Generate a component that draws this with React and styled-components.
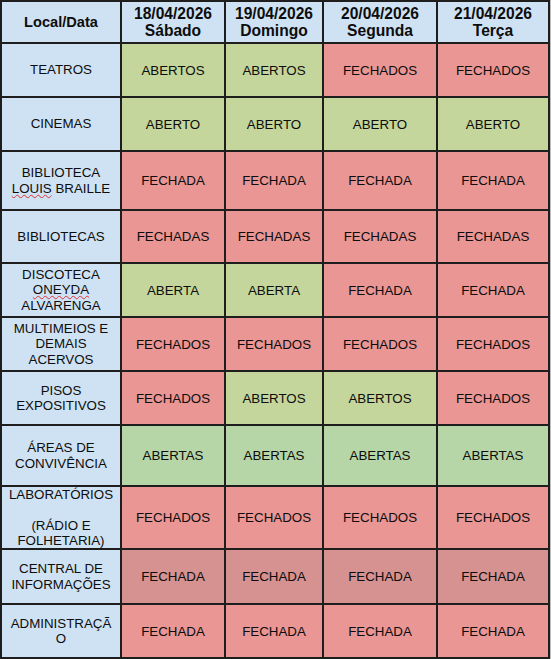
import styled, { createGlobalStyle } from 'styled-components'

const GlobalStyle = createGlobalStyle`
  html, body {
    margin: 0;
    padding: 0;
    background: #ffffff;
  }
  body {
    font-family: "Liberation Sans", Arial, sans-serif;
  }
`;

const Sheet = styled.div`
    display: grid;
    grid-template-columns: 118px 102px 96px 112px 110px;
    gap: 2px;
    padding: 2px;
    width: 546px;
    background: #1e1e1e;
    box-shadow: 1px 0 0 #bdbdbd;
`;

const Cell = styled.div`
    display: flex;
    flex-direction: column;
    align-items: center;
    justify-content: center;
    text-align: center;
    overflow: visible;
    color: #0d0d0d;
    font-family: "Liberation Sans", Arial, sans-serif;
`;

const HeadCell = styled(Cell)`
    background: #cfe2f3;
    font-weight: bold;
    font-size: 15.6px;
    line-height: 17px;
    &:first-child {
        font-size: 14.6px;
    }
`;

const PlaceCell = styled(Cell)`
    background: #cfe2f3;
    font-size: 13.33px;
    line-height: 15.3px;
`;

const Line = styled.span`
    display: block;
    white-space: nowrap;
`;

const Typo = styled.span`
    text-decoration: underline wavy #e03030;
    text-decoration-thickness: 1px;
    text-underline-offset: 1px;
`;

const StatusCell = styled(Cell)`
    background: ${p => p.$bg};
    font-size: 13.33px;
`;

const days = [
    { date: '18/04/2026', name: 'Sábado' },
    { date: '19/04/2026', name: 'Domingo' },
    { date: '20/04/2026', name: 'Segunda' },
    { date: '21/04/2026', name: 'Terça' },
]

// status per cell: o = open (green), c = closed (red)
const rows = [
    { place: ['TEATROS'], h: 52, cells: [['ABERTOS', 'o'], ['ABERTOS', 'o'], ['FECHADOS', 'c'], ['FECHADOS', 'c']] },
    { place: ['CINEMAS'], h: 52, cells: [['ABERTO', 'o'], ['ABERTO', 'o'], ['ABERTO', 'o'], ['ABERTO', 'o']] },
    { place: ['BIBLIOTECA', <><Typo>LOUIS</Typo> BRAILLE</>], h: 57, cells: [['FECHADA', 'c'], ['FECHADA', 'c'], ['FECHADA', 'c'], ['FECHADA', 'c']] },
    { place: ['BIBLIOTECAS'], h: 51, cells: [['FECHADAS', 'c'], ['FECHADAS', 'c'], ['FECHADAS', 'c'], ['FECHADAS', 'c']] },
    { place: ['DISCOTECA', <Typo>ONEYDA</Typo>, 'ALVARENGA'], h: 52, cells: [['ABERTA', 'o'], ['ABERTA', 'o'], ['FECHADA', 'c'], ['FECHADA', 'c']] },
    { place: ['MULTIMEIOS E', 'DEMAIS', 'ACERVOS'], h: 52, cells: [['FECHADOS', 'c'], ['FECHADOS', 'c'], ['FECHADOS', 'c'], ['FECHADOS', 'c']] },
    { place: ['PISOS', 'EXPOSITIVOS'], h: 52, cells: [['FECHADOS', 'c'], ['ABERTOS', 'o'], ['ABERTOS', 'o'], ['FECHADOS', 'c']] },
    { place: ['ÁREAS DE', 'CONVIVÊNCIA'], h: 59, tone: 'leaf', cells: [['ABERTAS', 'o'], ['ABERTAS', 'o'], ['ABERTAS', 'o'], ['ABERTAS', 'o']] },
    { place: ['LABORATÓRIOS', '\u00a0', '(RÁDIO E', 'FOLHETARIA)'], h: 61, cells: [['FECHADOS', 'c'], ['FECHADOS', 'c'], ['FECHADOS', 'c'], ['FECHADOS', 'c']] },
    { place: ['CENTRAL DE', 'INFORMAÇÕES'], h: 53, tone: 'dusk', cells: [['FECHADA', 'c'], ['FECHADA', 'c'], ['FECHADA', 'c'], ['FECHADA', 'c']] },
    { place: ['ADMINISTRAÇÃ', 'O'], h: 52, cells: [['FECHADA', 'c'], ['FECHADA', 'c'], ['FECHADA', 'c'], ['FECHADA', 'c']] },
]

const colours = {
    o: '#c4d69b',
    c: '#e99694',
    leaf: '#b7d6a8',
    dusk: '#d59290',
}

function Row({ r }) {
    return (
        <>
            <PlaceCell>
                {r.place.map((l, i) => <Line key={i}>{l}</Line>)}
            </PlaceCell>
            {r.cells.map(([label, s], i) => (
                <StatusCell key={i} $bg={r.tone ? colours[r.tone] : colours[s]}>
                    {label}
                </StatusCell>
            ))}
        </>
    )
}

export default function App() {
    const rowSizes = [40, ...rows.map(r => r.h)].map(h => `${h}px`).join(' ')
    return (
        <>
            <GlobalStyle />
            <Sheet style={{ gridTemplateRows: rowSizes }}>
                <HeadCell>Local/Data</HeadCell>
                {days.map(d => (
                    <HeadCell key={d.date}>
                        <span>{d.date}</span>
                        <span>{d.name}</span>
                    </HeadCell>
                ))}
                {rows.map((r, i) => (
                    <Row key={i} r={r} />
                ))}
            </Sheet>
        </>
    )
}
